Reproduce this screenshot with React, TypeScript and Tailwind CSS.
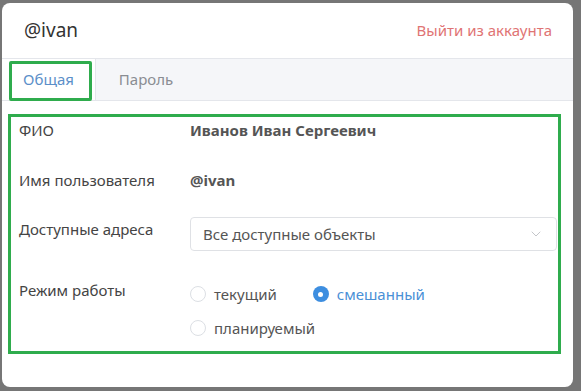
import { ChevronDown } from 'lucide-react';

const font = { fontFamily: '"Noto Sans", "Open Sans", sans-serif' };

function Radio({ label, checked }: { label: string; checked?: boolean }) {
  return (
    <label className="flex items-center gap-[8px] h-[20px]">
      {checked ? (
        <span className="flex h-[16px] w-[16px] items-center justify-center rounded-full bg-[#3d8ee0]">
          <span className="h-[5px] w-[5px] rounded-full bg-white" />
        </span>
      ) : (
        <span className="h-[16px] w-[16px] rounded-full border border-[#dcdfe4] bg-white" />
      )}
      <span className={checked ? 'text-[#4a90d6]' : 'text-[#555]'}>{label}</span>
    </label>
  );
}

export default function App() {
  return (
    <div className="h-[391px] w-[581px] bg-[#767676] pl-[2px] pt-[3px]" style={font}>
      <div className="flex h-[384px] w-[571px] flex-col overflow-hidden rounded-[8px] bg-white">
        <div className="flex h-[55px] items-center justify-between pl-[22px] pr-[21px]">
          <span className="text-[19px] text-[#333]">@ivan</span>
          <button className="text-[15px] text-[#df7474]">Выйти из аккаунта</button>
        </div>

        <div className="flex h-[43px] border-y border-[#e4e6eb] bg-[#f5f6f9] text-[15px]">
          <div className="relative flex w-[94px] items-center justify-center border-r border-[#e4e6eb] bg-white text-[#5b8fc9]">
            Общая
            <div className="absolute left-[7px] top-[2px] h-[40px] w-[83px] rounded-[2px] border-[3px] border-[#2fac4d]" />
          </div>
          <div className="flex w-[100px] items-center justify-center text-[#8a8d93]">Пароль</div>
        </div>

        <div className="ml-[6px] mr-[12px] mt-[13px] border-[3px] border-[#2fac4d] pb-[13px] pl-[8px] pr-[1px] pt-[3px] text-[15px] text-[#444]">
          <div className="flex h-[20px] items-center">
            <div className="w-[171px]">ФИО</div>
            <div className="font-bold text-[#555]">Иванов Иван Сергеевич</div>
          </div>
          <div className="mt-[30px] flex h-[20px] items-center">
            <div className="w-[171px]">Имя пользователя</div>
            <div className="font-bold text-[#555]">@ivan</div>
          </div>
          <div className="mt-[27px] flex">
            <div className="mt-[2px] h-[20px] w-[171px] leading-[20px]">Доступные адреса</div>
            <div className="flex h-[34px] flex-1 items-center justify-between rounded-[4px] border border-[#dfe1e5] pl-[12px] pr-[12px] text-[#555]">
              <span>Все доступные объекты</span>
              <ChevronDown size={16} strokeWidth={1.2} className="text-[#b5b8bd]" />
            </div>
          </div>
          <div className="mt-[29px] flex">
            <div className="h-[20px] w-[171px] leading-[20px]">Режим работы</div>
            <div className="flex flex-col gap-[14px] pt-[4px]">
              <div className="flex gap-[36px]">
                <Radio label="текущий" />
                <Radio label="смешанный" checked />
              </div>
              <Radio label="планируемый" />
            </div>
          </div>
        </div>
      </div>
    </div>
  );
}
